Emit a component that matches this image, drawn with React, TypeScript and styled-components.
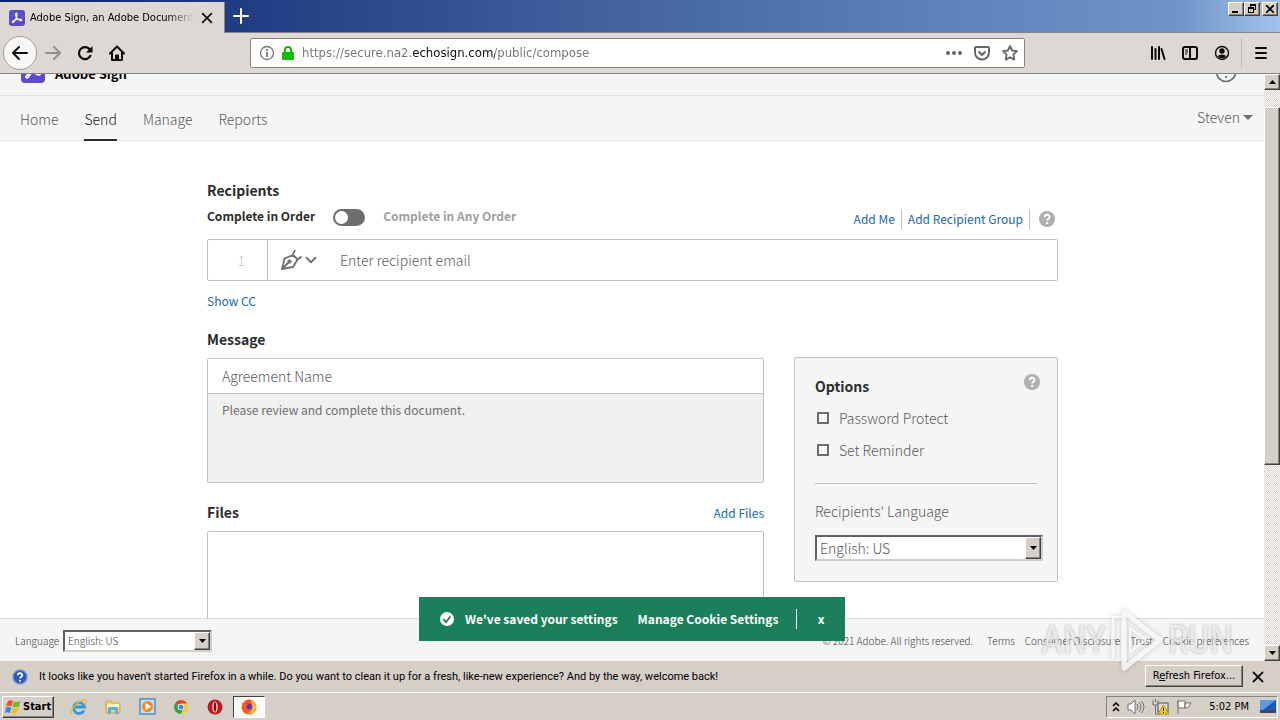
import React from "react";
import styled, { createGlobalStyle, css } from "styled-components";

const clean = `"Noto Sans CJK SC", "Open Sans", sans-serif`;
const chrome = `Roboto, "DejaVu Sans Condensed", sans-serif`;
const tahoma = `"DejaVu Sans Condensed", "DejaVu Sans", sans-serif`;

const GlobalStyle = createGlobalStyle`
  *, *::before, *::after { box-sizing: border-box; }
  body { margin: 0; background: #fff; }
  button, input, select, textarea { font: inherit; color: inherit; margin: 0; }
  svg { display: block; flex: none; }
  h1, h2, p { margin: 0; }
`;

const raised = css`
  border: 1px solid;
  border-color: #fff #404040 #404040 #fff;
  box-shadow: inset -1px -1px 0 #87837d;
  background: #d5cfc8;
`;

const Desktop = styled.div`
  display: flex;
  flex-direction: column;
  height: 100vh;
  overflow: hidden;
  font-family: ${chrome};
  font-size: 11px;
  color: #000;
`;

/* ---------- Browser chrome ---------- */

const TabStrip = styled.div`
  display: flex;
  flex: none;
  height: 33px;
  background: linear-gradient(90deg, #0a246a, #203b80 18%, #3f5f9d 45%, #5c80ba 72%, #7093c8 92%, #a0c4ec);
`;

const Tab = styled.div`
  display: flex;
  align-items: center;
  gap: 5px;
  width: 225px;
  margin-top: 2px;
  padding: 0 9px;
  background: #dcd8d3;
  border-right: 1px solid #87837d;
`;

const TabTitle = styled.span`
  flex: 1;
  overflow: hidden;
  white-space: nowrap;
  font-family: ${tahoma};
  line-height: 16px;
  mask-image: linear-gradient(90deg, #000 84%, transparent);
`;

const IconButton = styled.button<{ $w?: number }>`
  display: flex;
  align-items: center;
  justify-content: center;
  flex: none;
  width: ${(p) => p.$w ?? 32}px;
  padding: 0;
  border: 0;
  background: none;
`;

const StripEnd = styled.div`
  flex: 1;
  display: flex;
  justify-content: flex-end;
  align-items: flex-start;
  padding: 2px 2px 0 0;
  border-bottom: 1px solid #87837d;
`;

const NewTab = styled(IconButton)`
  border-bottom: 1px solid #87837d;
`;

const CaptionButton = styled.button<{ $gap?: boolean }>`
  ${raised}
  display: flex;
  align-items: center;
  justify-content: center;
  width: 16px;
  height: 14px;
  padding: 0;
  margin-left: ${(p) => (p.$gap ? 2 : 0)}px;
`;

const NavBar = styled.div`
  display: flex;
  flex: none;
  align-items: center;
  height: 41px;
  padding: 0 3px;
  background: #dcd8d3;
  border-bottom: 1px solid #87837d;
`;

const BackButton = styled(IconButton)`
  height: 34px;
  border: 1px solid #a09c96;
  border-radius: 50%;
  background: #f8f7f6;
`;

const Spring = styled.div`
  flex: 0 1 117px;
`;

const UrlBox = styled.div`
  display: flex;
  flex: 1;
  align-items: center;
  gap: 6px;
  height: 30px;
  padding: 0 0 0 8px;
  background: #fff;
  border: 1px solid #87837d;
  border-radius: 2px;
`;

const UrlInput = styled.input`
  flex: 1;
  min-width: 0;
  padding: 0;
  margin-left: 1px;
  border: 0;
  outline: 0;
  font-family: ${tahoma};
  font-size: 13px;
  line-height: 18px;
  color: #0c0c0d;
  background: linear-gradient(90deg, #737373 111px, #0c0c0d 111px, #0c0c0d 193px, #737373 193px);
  -webkit-background-clip: text;
  background-clip: text;
  -webkit-text-fill-color: transparent;
`;

const UrlActions = styled.div`
  display: flex;
`;

const Divider = styled.div<{ $h: number; $color: string; $gap?: number }>`
  flex: none;
  width: 1px;
  height: ${(p) => p.$h}px;
  margin: 0 ${(p) => p.$gap ?? 0}px;
  background: ${(p) => p.$color};
`;

/* ---------- Web page ---------- */

const Viewport = styled.div`
  display: flex;
  flex: 1;
  min-height: 0;
`;

const Page = styled.div`
  position: relative;
  display: flex;
  flex-direction: column;
  flex: 1;
  min-width: 0;
  overflow: hidden;
  background: #fff;
  font-family: ${clean};
  font-size: 14px;
  font-weight: 300;
  color: #5a5a5a;
`;

const BrandBar = styled.header`
  display: flex;
  flex: none;
  align-items: flex-end;
  justify-content: space-between;
  height: 22px;
  padding: 0 12px 12px 21px;
  background: #f5f5f5;
  border-bottom: 1px solid #e1e1e1;
`;

const Brand = styled.div`
  display: flex;
  align-items: flex-end;
  gap: 10px;
  color: #000;
  font-size: 13px;
  font-weight: 700;
  line-height: 18px;
`;

const HelpMenu = styled.button`
  display: flex;
  align-items: center;
  gap: 8px;
  padding: 0;
  border: 0;
  background: none;
`;

const SiteNav = styled.nav`
  display: flex;
  flex: none;
  height: 45px;
  padding: 0 11px 0 20px;
  background: #f5f5f5;
  border-bottom: 1px solid #e1e1e1;
`;

const NavLinks = styled.div`
  display: flex;
  flex: 1;
  gap: 26px;
`;

const NavLink = styled.a<{ $active?: boolean }>`
  height: 45px;
  padding-top: 11px;
  line-height: 24px;
  text-decoration: none;
  color: ${(p) => (p.$active ? "#1c1c1c" : "#5a5a5a")};
  border-bottom: 2px solid ${(p) => (p.$active ? "#2c2c2c" : "transparent")};
`;

const UserMenu = styled.button`
  display: flex;
  align-items: center;
  gap: 3px;
  padding: 0 0 2px;
  border: 0;
  background: none;
`;

const Main = styled.main`
  flex: 1;
  min-height: 0;
  overflow: hidden;
  padding: 40px 206px 0 207px;
`;

const Heading = styled.h2`
  padding-bottom: 2px;
  font-size: 14px;
  font-weight: 700;
  line-height: 18px;
  color: #2c2c2c;
`;

const OrderRow = styled.div`
  display: flex;
  align-items: center;
  height: 32px;
  font-size: 12px;
  line-height: 20px;
`;

const OrderLabel = styled.label<{ $on?: boolean }>`
  padding-bottom: 2px;
  font-weight: 700;
  color: ${(p) => (p.$on ? "#2c2c2c" : "#a0a0a0")};
`;

const Switch = styled.input`
  appearance: none;
  width: 32px;
  height: 17px;
  margin: 0 18px;
  border: 2px solid #6e6e6e;
  border-radius: 9px;
  background: #6e6e6e;
  &::before {
    content: "";
    display: block;
    width: 13px;
    height: 13px;
    border-radius: 50%;
    background: #fff;
  }
`;

const RecipientLinks = styled.div`
  display: flex;
  align-items: center;
  gap: 6px;
  margin-left: auto;
  padding: 4px 3px 0 0;
`;

const TextLink = styled.a`
  font-size: 12px;
  font-weight: 400;
  line-height: 20px;
  color: #2068b0;
  text-decoration: none;
`;

const HelpButton = styled(IconButton)`
  width: 16px;
  height: 16px;
  margin-left: 3px;
`;

const Recipient = styled.div`
  display: flex;
  height: 42px;
  margin-top: 6px;
  border: 1px solid #c0c0c0;
  border-radius: 2px;
`;

const OrderNumber = styled.div`
  width: 60px;
  padding-right: 22px;
  border-right: 1px solid #c0c0c0;
  text-align: right;
  line-height: 40px;
  color: #c8c8c8;
`;

const RoleButton = styled.button`
  display: flex;
  align-items: center;
  gap: 3px;
  padding: 0 23px 0 12px;
  border: 0;
  background: none;
`;

const PlainInput = styled.input`
  flex: 1;
  min-width: 0;
  padding: 0;
  border: 0;
  outline: 0;
  background: none;
  &::placeholder { color: #5a5a5a; opacity: 1; }
`;

const CcRow = styled.div`
  height: 49px;
  padding-top: 9px;
  line-height: 20px;
`;

const Columns = styled.div`
  display: flex;
  gap: 30px;
`;

const MessageColumn = styled.div`
  flex: 1;
  min-width: 0;
`;

const MessageBox = styled.div`
  display: flex;
  flex-direction: column;
  margin: 8px 0 20px;
  border: 1px solid #c0c0c0;
  border-radius: 2px;
`;

const NameInput = styled(PlainInput)`
  flex: none;
  height: 35px;
  padding: 0 14px;
  border-bottom: 1px solid #c0c0c0;
`;

const MessageText = styled.textarea`
  display: block;
  height: 88px;
  padding: 6px 14px;
  border: 0;
  outline: 0;
  resize: none;
  font-size: 12px;
  font-weight: 400;
  line-height: 20px;
  color: #6e6e6e;
  background: #f0f0f0;
`;

const FilesHeader = styled.div`
  display: flex;
  justify-content: space-between;
  align-items: center;
`;

const DropZone = styled.div`
  height: 150px;
  margin-top: 8px;
  border: 1px solid #c0c0c0;
  border-radius: 2px;
`;

const Options = styled.aside`
  display: flex;
  flex-direction: column;
  align-self: flex-start;
  width: 264px;
  height: 225px;
  margin-top: 27px;
  padding: 16px 14px 18px 20px;
  background: #f5f5f5;
  border: 1px solid #c0c0c0;
  border-radius: 2px;
`;

const OptionsHeader = styled.div`
  display: flex;
  justify-content: space-between;
  height: 28px;
  padding-right: 3px;
  ${Heading} { padding-top: 3px; }
`;

const CheckRow = styled.label`
  display: flex;
  align-items: center;
  gap: 10px;
  height: 32px;
  padding-left: 2px;
`;

const Check = styled.input`
  appearance: none;
  width: 12px;
  height: 12px;
  border: 2px solid #6e6e6e;
  background: #fafafa;
`;

const Rule = styled.hr`
  width: 222px;
  margin: 17px 0 16px;
  border: 0;
  border-top: 1px solid #c0c0c0;
`;

const FieldLabel = styled.label`
  margin-bottom: 13px;
  line-height: 22px;
`;

const SelectFrame = styled.div<{ $w: string; $h: number }>`
  display: grid;
  grid-template-columns: 1fr 16px;
  width: ${(p) => p.$w};
  height: ${(p) => p.$h}px;
  border: 2px solid;
  border-color: #606060 #d5cfc8 #d5cfc8 #606060;
  background: #fff;
`;

const Select = styled.select`
  grid-area: 1 / 1 / 2 / 3;
  appearance: none;
  min-width: 0;
  padding: 0 3px;
  border: 0;
  outline: 0;
  background: none;
`;

const SelectArrow = styled.span`
  ${raised}
  grid-area: 1 / 2 / 2 / 3;
  display: flex;
  align-items: center;
  justify-content: center;
  pointer-events: none;
`;

const Footer = styled.footer`
  display: flex;
  flex: none;
  align-items: center;
  height: 43px;
  padding: 2px 15px 0;
  background: #f5f5f5;
  border-top: 1px solid #dcdcdc;
  font-size: 10px;
  line-height: 16px;
  color: #404040;
`;

const FooterLanguage = styled.div`
  display: flex;
  align-items: center;
  gap: 4px;
`;

const Legal = styled.div`
  display: flex;
  gap: 10px;
  margin-left: auto;
  white-space: nowrap;
  a { color: inherit; text-decoration: none; }
  span { margin-right: 4px; }
`;

const Toast = styled.div`
  position: absolute;
  bottom: 20px;
  left: 50%;
  transform: translateX(-50%);
  display: flex;
  align-items: center;
  width: 426px;
  height: 44px;
  padding: 0 0 0 21px;
  background: #1b7f5c;
  color: #fff;
  font-size: 12px;
  font-weight: 700;
  line-height: 20px;
  white-space: nowrap;
`;

const ToastText = styled.span`
  margin: 0 20px 0 11px;
`;

const ToastButton = styled.button`
  margin-right: 18px;
  padding: 0;
  border: 0;
  background: none;
`;

const ToastClose = styled.button`
  flex: 1;
  padding: 0;
  border: 0;
  background: none;
`;

/* ---------- Scrollbar ---------- */

const ScrollBar = styled.div`
  display: flex;
  flex-direction: column;
  flex: none;
  width: 16px;
  background: repeating-conic-gradient(#d5cfc8 0 25%, #fff 0 50%) 0 0 / 2px 2px;
`;

const ScrollButton = styled.button`
  ${raised}
  display: flex;
  align-items: center;
  justify-content: center;
  flex: none;
  height: 16px;
  padding: 0;
`;

const ScrollGap = styled.div<{ $share: number }>`
  flex: ${(p) => p.$share} 1 0;
`;

const ScrollThumb = styled.div`
  ${raised}
  flex: 357 1 0;
`;

/* ---------- Notification and taskbar ---------- */

const Notice = styled.div`
  display: flex;
  flex: none;
  align-items: center;
  height: 32px;
  padding: 0 14px 0 12px;
  background: #d5cfc8;
  border-bottom: 1px solid #fff;
`;

const NoticeText = styled.p`
  flex: 1;
  margin-left: 11px;
  white-space: nowrap;
`;

const RefreshButton = styled.button`
  ${raised}
  width: 98px;
  height: 22px;
  padding: 0;
  margin: 0 7px 2px 0;
  font-family: ${tahoma};
  white-space: nowrap;
`;

const TaskBar = styled.div`
  display: flex;
  flex: none;
  align-items: center;
  height: 27px;
  padding: 0 2px;
  background: #d5cfc8;
  font-family: ${tahoma};
`;

const StartButton = styled.button`
  ${raised}
  display: flex;
  align-items: center;
  gap: 2px;
  width: 52px;
  height: 22px;
  margin-right: 9px;
  padding: 0 2px;
  font-weight: 700;
`;

const TaskButton = styled(IconButton)<{ $pressed?: boolean }>`
  height: 22px;
  margin-right: 2px;
  ${(p) =>
    p.$pressed &&
    css`
      border: 1px solid;
      border-color: #404040 #fff #fff #404040;
      background: #fbfaf9;
    `}
`;

const Tray = styled.div`
  display: flex;
  align-items: center;
  gap: 7px;
  height: 22px;
  margin-left: auto;
  padding: 0 1px 0 5px;
  border: 1px solid;
  border-color: #87837d #fff #fff #87837d;
`;

const Clock = styled.time`
  margin: 0 4px 0 9px;
`;

/* ---------- Overlay watermark ---------- */

const Watermark = styled.div`
  position: absolute;
  right: 47px;
  bottom: 45px;
  display: flex;
  align-items: center;
  gap: 3px;
  pointer-events: none;
  font-family: "Roboto Condensed", "Liberation Sans Narrow", "Liberation Sans", sans-serif;
  font-size: 38px;
  line-height: 70px;
  color: rgba(255, 255, 255, 0.7);
  text-shadow: 0 0 3px rgba(0, 0, 0, 0.3);
  svg { filter: drop-shadow(0 0 2px rgba(0, 0, 0, 0.25)); }
`;

/* ---------- Drawings ---------- */

const AcrobatMark = ({ size }: { size: number }) => (
  <svg width={size} height={size} viewBox="0 0 24 24">
    <rect width="24" height="24" rx="4" fill="#5b4ccc" />
    <path
      d="M6 19c-2.500-.8-.5-3.200 3.500-4.300C14 13.300 19 13 19.200 15c0 2-4 .8-6.700-2.200C9.800 9.800 9 5 10.800 4.600c2.200-.3 1.700 4.400-.8 9C8.500 16.800 7 19.200 6 19z"
      fill="none"
      stroke="#fff"
      strokeWidth="1.700"
    />
  </svg>
);

const Stroke = ({ d, size = 16, w = 2, color = "#0c0c0d" }: { d: string; size?: number; w?: number; color?: string }) => (
  <svg width={size} height={size} viewBox="0 0 16 16" fill="none" stroke={color} strokeWidth={w} strokeLinecap="round" strokeLinejoin="round">
    <path d={d} />
  </svg>
);

const Triangle = ({ up, color = "#000", w = 7, h = 4 }: { up?: boolean; color?: string; w?: number; h?: number }) => (
  <svg width={w} height={h} viewBox="0 0 8 4" preserveAspectRatio="none">
    <path d={up ? "M0 4L4 0l4 4z" : "M0 0h8L4 4z"} fill={color} />
  </svg>
);

const HelpDisc = () => (
  <svg width="16" height="16" viewBox="0 0 16 16" fill="none">
    <circle cx="8" cy="8" r="8" fill="#b0b0b0" />
    <path d="M5.700 6.200C5.700 3 10.500 3 10.500 6c0 1.700-2.300 1.600-2.300 3.500" stroke="#fff" strokeWidth="1.900" />
    <circle cx="8.200" cy="12" r="1.200" fill="#fff" />
  </svg>
);

const FirefoxMark = () => (
  <svg width="16" height="16" viewBox="0 0 16 16">
    <circle cx="8" cy="8.300" r="7.500" fill="#ff8a16" />
    <path d="M1 6C3 1 9-1 12 2c4 3 4 9 0 12C6 17 0 13 1 6z" fill="#f9542b" />
    <path d="M9 0c5 3 8 8 4 13-2 2-5 2-7 1 5-1 8-6 3-14z" fill="#ffc62e" />
    <circle cx="7.500" cy="8" r="3.500" fill="#5a36b8" />
    <path d="M1 4l3 1 3 0-2 3c1 3 4 3 6 1-1 5-9 5-9-1z" fill="#ff5a22" />
  </svg>
);

const ExplorerMark = () => (
  <svg width="18" height="18" viewBox="0 0 18 18" fill="none">
    <path d="M14 12.500A5.500 5.500 0 1 1 14.500 9H5" stroke="#2c9de0" strokeWidth="2.800" />
    <path d="M2 16C-1 13 8 2 14 2c3 0 3 2 1 5" stroke="#e9b93c" strokeWidth="1.400" />
  </svg>
);

const FolderMark = () => (
  <svg width="18" height="18" viewBox="0 0 18 18">
    <path d="M2 3h5l1 2h8v10H2z" fill="#f0d274" stroke="#cda645" />
    <path d="M3 6h12v3H3z" fill="#fff6c8" />
    <path d="M4 16v-5q0-2 2-2h6q2 0 2 2v5h-3v-4H7v4z" fill="#5caee0" />
  </svg>
);

const MediaMark = () => (
  <svg width="17" height="17" viewBox="0 0 17 17">
    <rect x="1" y="1" width="15" height="15" fill="#c6def2" stroke="#4b90c8" strokeWidth="1.500" />
    <circle cx="8.500" cy="8.500" r="5.500" fill="#f58a1f" />
    <path d="M6.500 5l6 3.500-6 3.500z" fill="#fff" />
  </svg>
);

const ChromeMark = () => (
  <svg width="14" height="14" viewBox="0 0 14 14">
    <circle cx="7" cy="7" r="7" fill="#f8c82c" />
    <path d="M7 7L1 3.500A7 7 0 0 1 13 3.500H7z" fill="#de4334" />
    <path d="M7 7L1 3.500A7 7 0 0 0 6.500 14L9.500 9z" fill="#2da150" />
    <circle cx="7" cy="7" r="3.300" fill="#fff" />
    <circle cx="7" cy="7" r="2.500" fill="#4583ee" />
  </svg>
);

const OperaMark = () => (
  <svg width="16" height="16" viewBox="0 0 16 16">
    <circle cx="8" cy="8" r="7.500" fill="#c11722" />
    <ellipse cx="8" cy="8" rx="2.700" ry="5.500" fill="#f3dede" />
    <ellipse cx="8" cy="8" rx="1.300" ry="4.800" fill="#7e0c12" />
  </svg>
);

const WindowsMark = () => (
  <svg width="16" height="16" viewBox="0 0 16 16">
    <path d="M3 2q3-1.500 5 0L6.500 7.500q-3-1.300-5.500 0z" fill="#e8562a" />
    <path d="M9 2.500q3 1 6.500-.5L14 7.500q-3 1.500-6.300.3z" fill="#7bb526" />
    <path d="M1 8.500q2.500-1.300 5.200 0L4.800 14Q2 12.500 0 14z" fill="#3189d8" />
    <path d="M7.400 9q3 1.200 6.300-.3L12 14q-3 1.500-6 .3z" fill="#f8bd20" />
  </svg>
);

const tasks = [
  { name: "Internet Explorer", icon: <ExplorerMark /> },
  { name: "Windows Explorer", icon: <FolderMark /> },
  { name: "Media Player", icon: <MediaMark /> },
  { name: "Chrome", icon: <ChromeMark /> },
  { name: "Opera", icon: <OperaMark /> },
];

const navItems = ["Home", "Send", "Manage", "Reports"];

export default function App() {
  return (
    <Desktop>
      <GlobalStyle />

      <TabStrip>
        <Tab>
          <AcrobatMark size={16} />
          <TabTitle>Adobe Sign, an Adobe Document Cloud</TabTitle>
          <IconButton $w={16} aria-label="Close tab">
            <Stroke size={14} d="M3 3l10 10M13 3L3 13" />
          </IconButton>
        </Tab>
        <NewTab aria-label="New tab">
          <Stroke color="#fff" d="M8 1v14M1 8h14" />
        </NewTab>
        <StripEnd>
          <CaptionButton aria-label="Minimize">
            <svg width="10" height="8"><path d="M1 6h6v2H1z" /></svg>
          </CaptionButton>
          <CaptionButton aria-label="Restore">
            <svg width="10" height="10" viewBox="0 0 10 10">
              <path d="M3 0h6v6H7V5h1V2H4v1H3z" />
              <path fillRule="evenodd" d="M1 3h6v6H1zM2 5v3h4V5z" />
            </svg>
          </CaptionButton>
          <CaptionButton $gap aria-label="Close">
            <svg width="8" height="8" stroke="#000" strokeWidth="1.700"><path d="M0 0l8 8M8 0L0 8" /></svg>
          </CaptionButton>
        </StripEnd>
      </TabStrip>

      <NavBar>
        <BackButton $w={34} aria-label="Back">
          <Stroke d="M15 8H1M7 2L1 8l6 6" />
        </BackButton>
        <IconButton aria-label="Forward">
          <Stroke color="#92908d" d="M1 8h14M9 2l6 6-6 6" />
        </IconButton>
        <IconButton aria-label="Reload">
          <svg width="16" height="16" viewBox="0 0 16 16" fill="none">
            <path d="M12.800 4.500A6 6 0 1 0 13.700 10" stroke="#0c0c0d" strokeWidth="2.200" />
            <path d="M15.500 1v6.500H9z" fill="#0c0c0d" />
          </svg>
        </IconButton>
        <IconButton aria-label="Home">
          <svg width="16" height="16" viewBox="0 0 16 16" fill="none" stroke="#0c0c0d" strokeWidth="2" strokeLinejoin="round" strokeLinecap="round">
            <path d="M1 8.500L8 1.500l7 7M3 8v7h10V8" />
            <path d="M7 14v-3.500h2V14" />
          </svg>
        </IconButton>
        <Spring />
        <UrlBox>
          <svg width="16" height="16" viewBox="0 0 16 16" fill="none" stroke="#737373">
            <circle cx="8" cy="8" r="6.500" strokeWidth="1.300" />
            <path d="M8 7v5M8 4v2" strokeWidth="1.700" />
          </svg>
          <svg width="14" height="16" viewBox="0 0 14 16" fill="none">
            <path d="M4 8V5q0-3 3-3t3 3v3" stroke="#12bc00" strokeWidth="2" />
            <rect x="1" y="7" width="12" height="8" rx="1" fill="#12bc00" />
          </svg>
          <UrlInput aria-label="Address" defaultValue="https://secure.na2.echosign.com/public/compose" />
          <UrlActions>
            <IconButton $w={28} aria-label="Page actions">
              <svg width="16" height="16" fill="#666"><circle cx="2" cy="8" r="2" /><circle cx="8" cy="8" r="2" /><circle cx="14" cy="8" r="2" /></svg>
            </IconButton>
            <IconButton $w={28} aria-label="Save to Pocket">
              <Stroke color="#666" d="M2 2h12q1 0 1 1v4.500a7 7 0 0 1-14 0V3q0-1 1-1zM5 7l3 3 3-3" />
            </IconButton>
            <IconButton $w={28} aria-label="Bookmark">
              <Stroke color="#666" w={1.8} d="M8 1l2.100 4.500 4.900.7-3.600 3.400.9 5L8 12.200 3.700 14.600l.9-5L1 6.200l4.900-.7z" />
            </IconButton>
          </UrlActions>
        </UrlBox>
        <Spring />
        <IconButton aria-label="Library">
          <Stroke d="M2 2v12M5.500 4v10M9 2v12M11.500 4l3 10" />
        </IconButton>
        <IconButton aria-label="Sidebar">
          <svg width="16" height="16" viewBox="0 0 16 16" fill="none" stroke="#0c0c0d" strokeWidth="2">
            <rect x="1" y="2" width="14" height="12" rx="2" />
            <path d="M8 2v12" />
            <path d="M3 5h3M3 7h3M3 9h2" strokeWidth="1" />
          </svg>
        </IconButton>
        <IconButton aria-label="Account">
          <svg width="16" height="16" viewBox="0 0 16 16">
            <circle cx="8" cy="8" r="6.500" fill="none" stroke="#0c0c0d" strokeWidth="1.400" />
            <circle cx="8" cy="6" r="2.700" fill="#0c0c0d" />
            <path d="M3.500 11q4.500-3 9 0-4.500 5-9 0z" fill="#0c0c0d" />
          </svg>
        </IconButton>
        <Divider $h={30} $gap={3} $color="#bcb8b2" />
        <IconButton aria-label="Menu">
          <Stroke d="M3 3h10M3 8h10M3 13h10" />
        </IconButton>
      </NavBar>

      <Viewport>
        <Page>
          <BrandBar>
            <Brand>
              <AcrobatMark size={24} />
              Adobe Sign
            </Brand>
            <HelpMenu aria-label="Help">
              <svg width="22" height="22" viewBox="0 0 22 22" fill="none" stroke="#6e6e6e" strokeWidth="1.700">
                <circle cx="11" cy="11" r="9.500" />
                <path d="M8 8.500C8 4.500 14 5 14 8.500c0 2-3 2-3 4.500M11 15v2" />
              </svg>
              <Triangle color="#6e6e6e" />
            </HelpMenu>
          </BrandBar>

          <SiteNav>
            <NavLinks>
              {navItems.map((item) => (
                <NavLink key={item} href="#" $active={item === "Send"}>{item}</NavLink>
              ))}
            </NavLinks>
            <UserMenu>
              Steven <Triangle color="#6e6e6e" w={10} h={5} />
            </UserMenu>
          </SiteNav>

          <Main>
            <Heading>Recipients</Heading>
            <OrderRow>
              <OrderLabel $on htmlFor="order">Complete in Order</OrderLabel>
              <Switch id="order" type="checkbox" role="switch" />
              <OrderLabel htmlFor="order">Complete in Any Order</OrderLabel>
              <RecipientLinks>
                <TextLink href="#">Add Me</TextLink>
                <Divider $h={20} $color="#c0c0c0" />
                <TextLink href="#">Add Recipient Group</TextLink>
                <Divider $h={20} $color="#c0c0c0" />
                <HelpButton aria-label="Recipients help"><HelpDisc /></HelpButton>
              </RecipientLinks>
            </OrderRow>
            <Recipient>
              <OrderNumber>1</OrderNumber>
              <RoleButton aria-label="Recipient role">
                <svg width="22" height="22" viewBox="0 0 22 22" fill="none" stroke="#6e6e6e" strokeWidth="1.800" strokeLinejoin="round">
                  <path d="M2 20L4.500 9.500 13 6l4.500 4.500L13 18zM2 20l7-7M12.500 6.500L15 1M17 11l4.500-3.500" />
                  <circle cx="9.500" cy="12.500" r="1.200" />
                </svg>
                <Stroke size={12} color="#6e6e6e" d="M2 5l6 6 6-6" w={2.4} />
              </RoleButton>
              <PlainInput aria-label="Recipient email" placeholder="Enter recipient email" />
            </Recipient>
            <CcRow><TextLink href="#">Show CC</TextLink></CcRow>

            <Columns>
              <MessageColumn>
                <Heading>Message</Heading>
                <MessageBox>
                  <NameInput aria-label="Agreement name" placeholder="Agreement Name" />
                  <MessageText aria-label="Message" defaultValue="Please review and complete this document." />
                </MessageBox>
                <FilesHeader>
                  <Heading>Files</Heading>
                  <TextLink href="#">Add Files</TextLink>
                </FilesHeader>
                <DropZone />
              </MessageColumn>

              <Options>
                <OptionsHeader>
                  <Heading>Options</Heading>
                  <HelpButton aria-label="Options help"><HelpDisc /></HelpButton>
                </OptionsHeader>
                <CheckRow><Check type="checkbox" />Password Protect</CheckRow>
                <CheckRow><Check type="checkbox" />Set Reminder</CheckRow>
                <Rule />
                <FieldLabel htmlFor="recipient-language">Recipients' Language</FieldLabel>
                <SelectFrame $w="100%" $h={26}>
                  <Select id="recipient-language"><option>English: US</option></Select>
                  <SelectArrow><Triangle /></SelectArrow>
                </SelectFrame>
              </Options>
            </Columns>
          </Main>

          <Footer>
            <FooterLanguage>
              <label htmlFor="site-language">Language</label>
              <SelectFrame $w="149px" $h={22}>
                <Select id="site-language"><option>English: US</option></Select>
                <SelectArrow><Triangle /></SelectArrow>
              </SelectFrame>
            </FooterLanguage>
            <Legal>
              <span>© 2021 Adobe. All rights reserved.</span>
              <a href="#">Terms</a>
              <a href="#">Consumer Disclosure</a>
              <a href="#">Trust</a>
              <a href="#">Cookie preferences</a>
            </Legal>
          </Footer>

          <Toast role="status">
            <svg width="14" height="14" viewBox="0 0 14 14" fill="none">
              <circle cx="7" cy="7" r="7" fill="#fff" />
              <path d="M3.500 7l2.500 3 4.500-5.500" stroke="#1b7f5c" strokeWidth="1.800" />
            </svg>
            <ToastText>We've saved your settings</ToastText>
            <ToastButton>Manage Cookie Settings</ToastButton>
            <Divider $h={20} $color="#fff" />
            <ToastClose aria-label="Dismiss">x</ToastClose>
          </Toast>
        </Page>

        <ScrollBar>
          <ScrollButton aria-label="Scroll up"><Triangle up /></ScrollButton>
          <ScrollGap $share={17} />
          <ScrollThumb />
          <ScrollGap $share={181} />
          <ScrollButton aria-label="Scroll down"><Triangle /></ScrollButton>
        </ScrollBar>
      </Viewport>

      <Notice>
        <svg width="16" height="16" viewBox="0 0 16 16" fill="none">
          <circle cx="8" cy="8" r="7" fill="#2456c4" stroke="#7d95cf" strokeWidth="1.500" />
          <path d="M5.700 6.300C5.700 3.500 10.300 3.500 10.300 6.200c0 1.500-2.200 1.600-2.200 3.300" stroke="#fff" strokeWidth="1.800" />
          <circle cx="8.100" cy="11.800" r="1.100" fill="#fff" />
        </svg>
        <NoticeText>
          It looks like you haven't started Firefox in a while. Do you want to clean it up for a fresh, like-new experience? And by the way, welcome back!
        </NoticeText>
        <RefreshButton>R<u>e</u>fresh Firefox...</RefreshButton>
        <IconButton $w={16} aria-label="Dismiss notification">
          <Stroke size={12} d="M2 2l12 12M14 2L2 14" w={2.4} />
        </IconButton>
      </Notice>

      <TaskBar>
        <StartButton><WindowsMark />Start</StartButton>
        {tasks.map((t) => (
          <TaskButton key={t.name} aria-label={t.name}>{t.icon}</TaskButton>
        ))}
        <TaskButton $pressed aria-label="Firefox"><FirefoxMark /></TaskButton>
        <Tray>
          <svg width="8" height="10" fill="none" stroke="#000" strokeWidth="1.500"><path d="M1 4l3-3 3 3M1 9l3-3 3 3" /></svg>
          <svg width="18" height="16" viewBox="0 0 18 16" fill="none" stroke="#77736e">
            <path d="M1 5h3l4-4v14l-4-4H1z" fill="#fff" />
            <path d="M10 5q2 3 0 6M12 3q4 5 0 10M14.500 2q5 6 0 12" />
          </svg>
          <svg width="17" height="16" viewBox="0 0 17 16" fill="none" stroke="#55514d">
            <rect x="6" y="4" width="10" height="9" fill="#dcdcdc" />
            <path d="M1 1v5h5V1M3.500 6v9H8M3.500 0v3" stroke="#77736e" />
            <path d="M11.500 6L17 15H6z" fill="#f5cc22" stroke="#b28f10" />
            <path d="M11.500 9v3M11.500 13v1" stroke="#000" />
          </svg>
          <svg width="17" height="16" viewBox="0 0 17 16" fill="#fff" stroke="#77736e">
            <path d="M2 1v14M2 2h7v7H2zM9 4h6l-2 3q0 2-4 2z" />
          </svg>
          <Clock>5:02 PM</Clock>
          <svg width="16" height="14" viewBox="0 0 16 14">
            <rect width="16" height="12" fill="#1c58b4" />
            <path d="M0 0h16L3 10H0z" fill="#5f9ae0" />
            <path d="M0 10h16v3H0z" fill="#3b4a60" />
          </svg>
        </Tray>
      </TaskBar>

      <Watermark aria-hidden="true">
        <span>ANY</span>
        <svg width="56" height="64" viewBox="0 0 56 64" fill="none" stroke="rgba(255,255,255,.8)" strokeWidth="5" strokeLinejoin="round">
          <path d="M15 4l36 28-36 28z" />
          <path d="M12 9H4v42" strokeWidth="3" />
          <path d="M21 20v24l16-12z" strokeWidth="2" />
        </svg>
        <span>RUN</span>
      </Watermark>
    </Desktop>
  );
}
